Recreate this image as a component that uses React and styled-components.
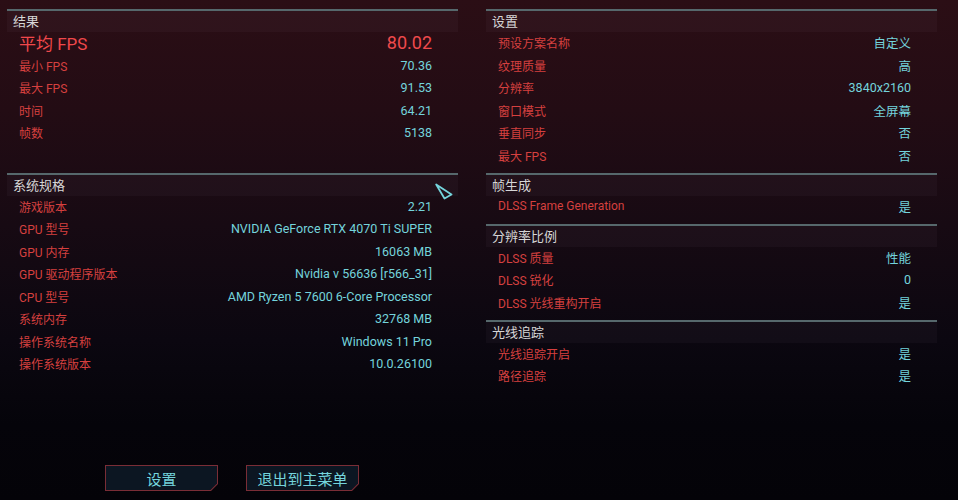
import React from 'react';
import styled, { createGlobalStyle } from 'styled-components';

const GlobalStyle = createGlobalStyle`
  html, body {
    margin: 0;
    padding: 0;
    background: #040308;
  }
`;

const Page = styled.div`
  min-height: 100vh;
  display: flex;
  flex-direction: column;
  box-sizing: border-box;
  background: linear-gradient(180deg, #2b0e15 0%, #230c14 22%, #170a13 45%, #0b0710 68%, #05040a 85%, #040308 100%);
  font-family: Roboto, "Noto Sans CJK SC", sans-serif;
`;

const Board = styled.div`
  display: grid;
  grid-template-columns: 451px 451px;
  column-gap: 28px;
  padding: 9px 0 0 7px;
`;

const Column = styled.div`
  display: flex;
  flex-direction: column;
`;

const Section = styled.section`
  position: relative;
  border-top: 2px solid #56686c;
  padding-bottom: 5.5px;
`;

const Header = styled.div`
  height: 21px;
  box-sizing: border-box;
  display: flex;
  align-items: center;
  padding: 0 0 2px 6px;
  background: rgba(200, 190, 210, 0.04);
  color: #d6d6d6;
  font-size: 13px;
  font-family: "Noto Sans CJK SC", sans-serif;
`;

const Row = styled.div`
  height: 22.5px;
  box-sizing: border-box;
  display: flex;
  align-items: center;
  justify-content: space-between;
  padding: 0 26px 1px 12px;
`;

const Label = styled.span`
  color: ${p => (p.$big ? '#f0484b' : '#d5403f')};
  font-size: ${p => (p.$big ? '17px' : '12px')};
`;

const Value = styled.span`
  color: ${p => (p.$big ? '#ef4a4c' : '#74d4dc')};
  font-size: ${p => (p.$big ? '18px' : '12.5px')};
`;

const Cursor = styled.svg`
  position: absolute;
  right: 5px;
  top: 8px;
  width: 18px;
  height: 17px;
`;

const Footer = styled.div`
  margin-top: auto;
  display: flex;
  gap: 28px;
  padding: 0 0 9px 105px;
`;

const Button = styled.button`
  position: relative;
  width: 113px;
  height: 26px;
  border: none;
  padding: 0;
  background: #7a2d36;
  clip-path: polygon(0 0, 100% 0, 100% calc(100% - 7px), calc(100% - 7px) 100%, 0 100%);
  color: #74d4dc;
  font-size: 15px;
  font-family: "Noto Sans CJK SC", sans-serif;
  cursor: pointer;

  &::before {
    content: '';
    position: absolute;
    inset: 1px;
    background: #0c1622;
    clip-path: polygon(0 0, 100% 0, 100% calc(100% - 6.5px), calc(100% - 6.5px) 100%, 0 100%);
  }

  span {
    position: relative;
  }
`;

const results = [
  ['最小 FPS', '70.36'],
  ['最大 FPS', '91.53'],
  ['时间', '64.21'],
  ['帧数', '5138'],
];

const specs = [
  ['游戏版本', '2.21'],
  ['GPU 型号', 'NVIDIA GeForce RTX 4070 Ti SUPER'],
  ['GPU 内存', '16063 MB'],
  ['GPU 驱动程序版本', 'Nvidia v 56636 [r566_31]'],
  ['CPU 型号', 'AMD Ryzen 5 7600 6-Core Processor'],
  ['系统内存', '32768 MB'],
  ['操作系统名称', 'Windows 11 Pro'],
  ['操作系统版本', '10.0.26100'],
];

const settings = [
  ['预设方案名称', '自定义'],
  ['纹理质量', '高'],
  ['分辨率', '3840x2160'],
  ['窗口模式', '全屏幕'],
  ['垂直同步', '否'],
  ['最大 FPS', '否'],
];

const rightGroups = [
  { title: '帧生成', rows: [['DLSS Frame Generation', '是']] },
  {
    title: '分辨率比例',
    rows: [
      ['DLSS 质量', '性能'],
      ['DLSS 锐化', '0'],
      ['DLSS 光线重构开启', '是'],
    ],
  },
  {
    title: '光线追踪',
    rows: [
      ['光线追踪开启', '是'],
      ['路径追踪', '是'],
    ],
  },
];

function Rows({ items }) {
  return items.map(([k, v]) => (
    <Row key={k}>
      <Label>{k}</Label>
      <Value>{v}</Value>
    </Row>
  ));
}

export default function App() {
  return (
    <Page>
      <GlobalStyle />
      <Board>
        <Section>
          <Header>结果</Header>
          <Row>
            <Label $big>平均 FPS</Label>
            <Value $big>80.02</Value>
          </Row>
          <Rows items={results} />
        </Section>
        <Section>
          <Header>设置</Header>
          <Rows items={settings} />
        </Section>

        <Column>
          <Section>
            <Header>系统规格</Header>
            <Cursor viewBox="0 0 18 17">
              <path d="M1.2 1.5 L16.5 11.5 L9.5 15.5 Z" fill="none" stroke="#74d4dc" strokeWidth="1.8" strokeLinejoin="round" />
            </Cursor>
            <Rows items={specs} />
          </Section>
        </Column>
        <Column>
          {rightGroups.map(g => (
            <Section key={g.title}>
              <Header>{g.title}</Header>
              <Rows items={g.rows} />
            </Section>
          ))}
        </Column>
      </Board>
      <Footer>
        <Button><span>设置</span></Button>
        <Button><span>退出到主菜单</span></Button>
      </Footer>
    </Page>
  );
}
